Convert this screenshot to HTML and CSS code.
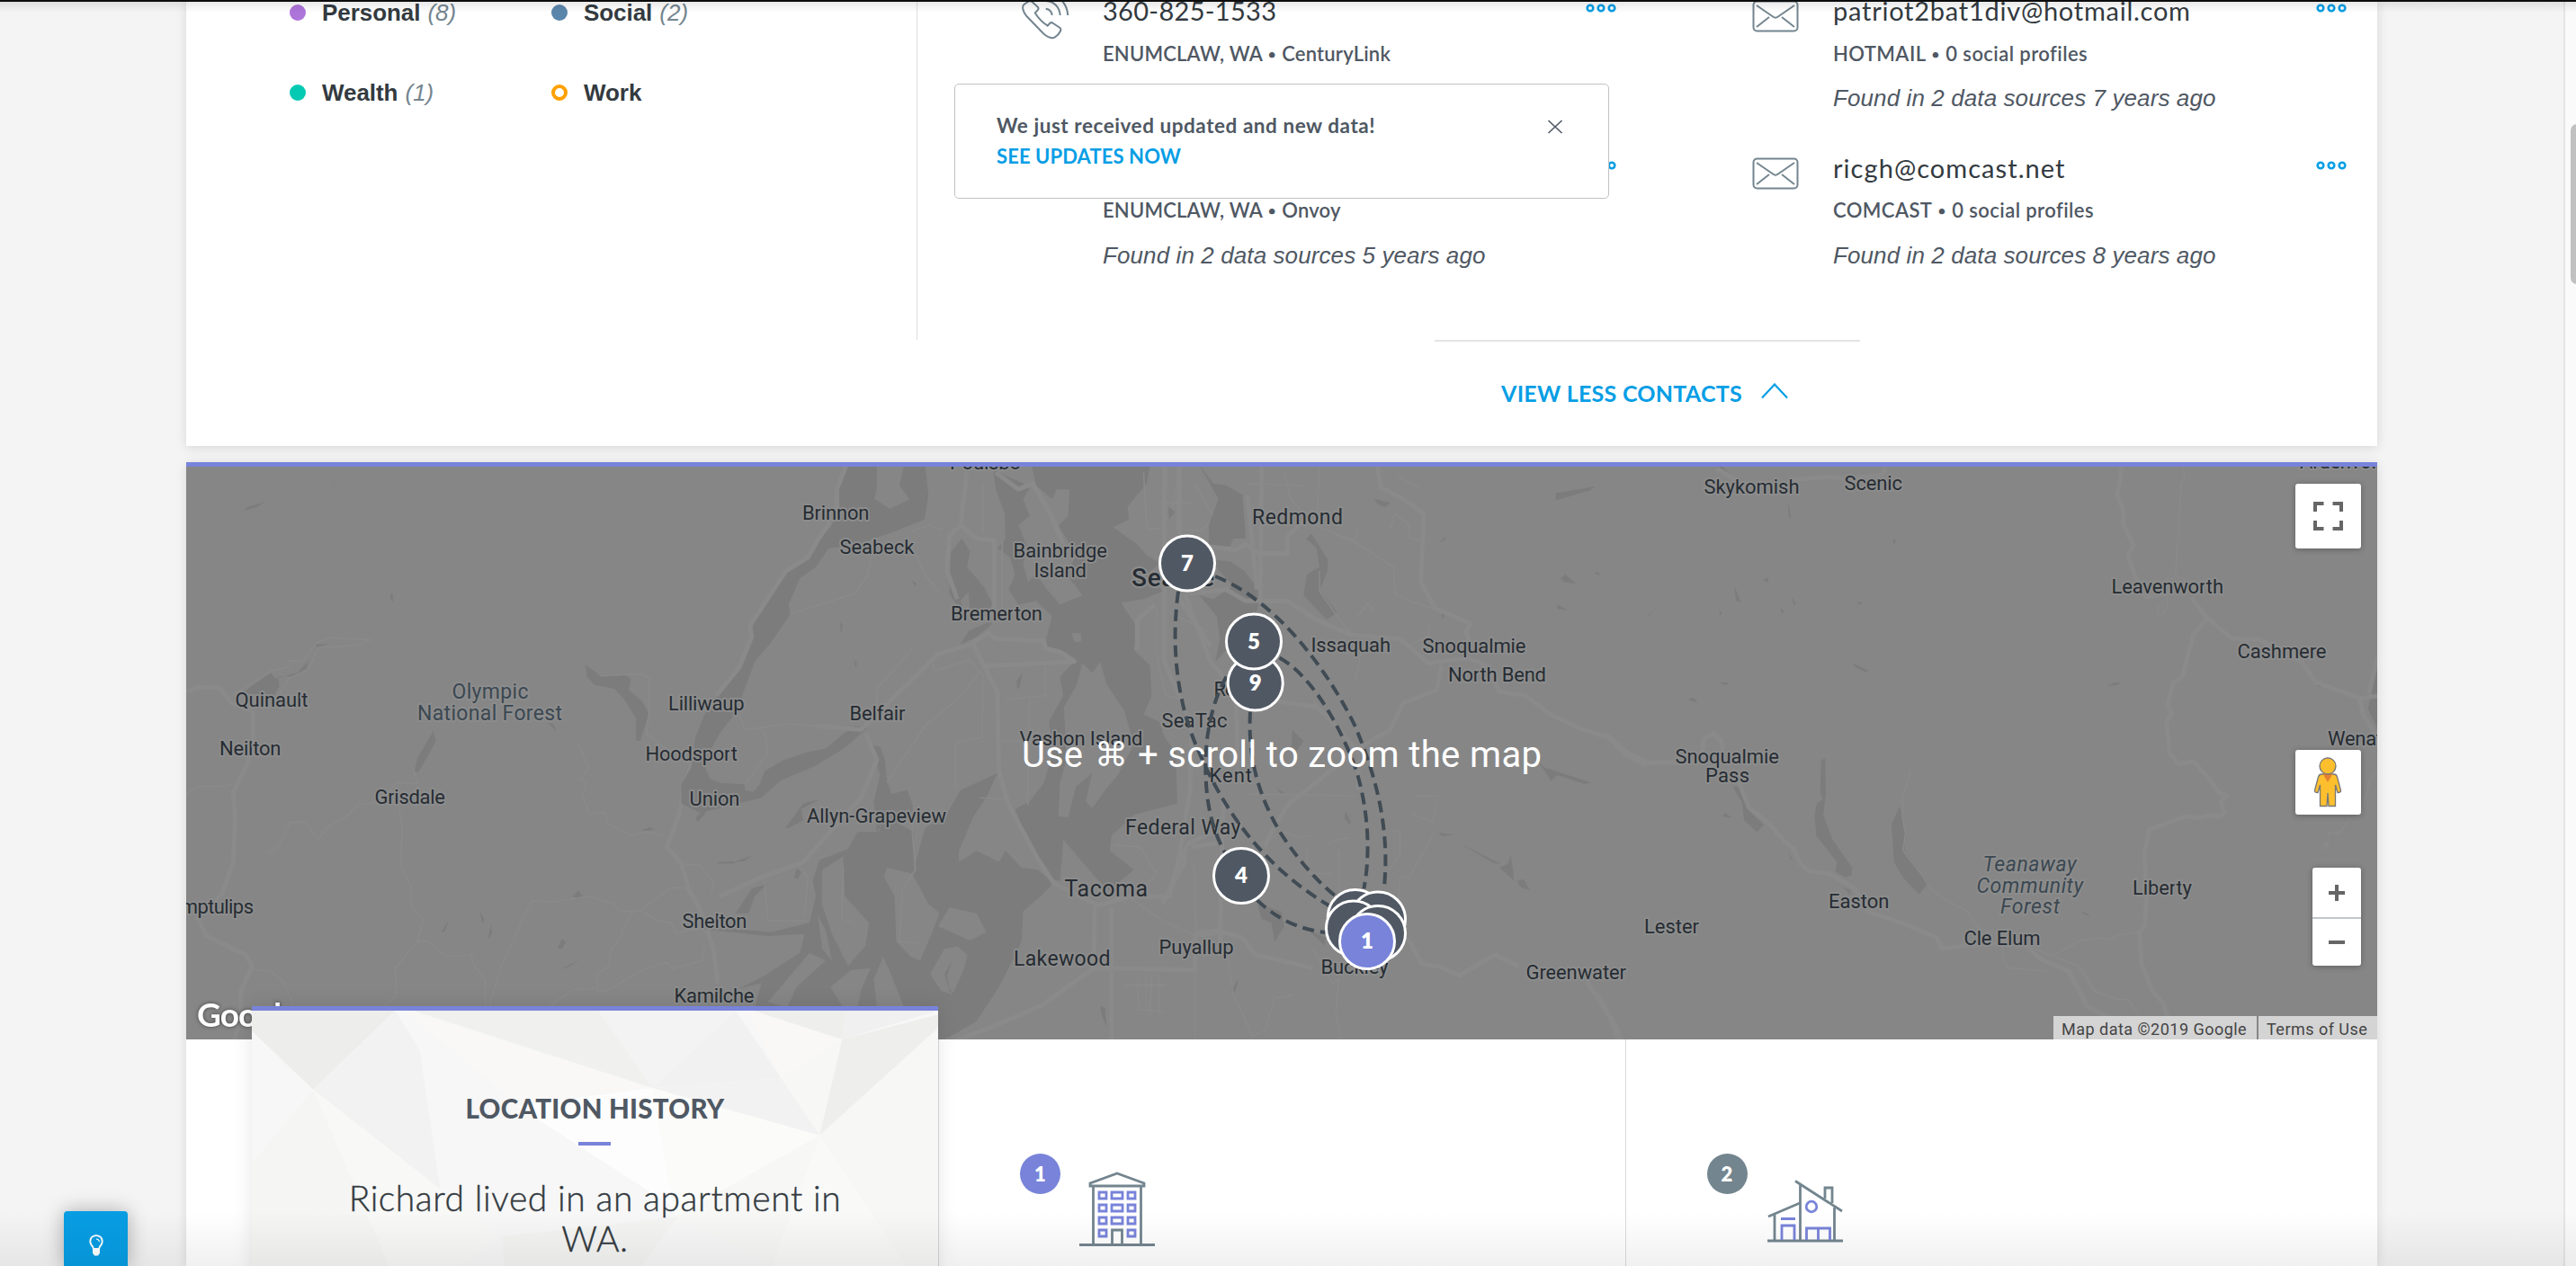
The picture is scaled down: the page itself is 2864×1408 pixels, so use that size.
FILE: index.html
```html
<!DOCTYPE html>
<html lang="en">
<head>
<meta charset="utf-8">
<title>Report</title>
<link rel="stylesheet" href="styles.css">
</head>
<body>
<svg class="defs" width="0" height="0">
  <symbol id="mail" viewBox="0 0 52 36"><rect x="1.5" y="1.5" width="49" height="33" rx="4"/><path d="M5 6l18.500 12.800q2.500 1.800 5 0L47 6M5 30l14-11M47 30L33 19"/></symbol>
  <symbol id="phone" viewBox="0 0 54 56"><path d="M5.700 29.300C1 24 0 18 2.500 16L5.700 13.700C8 12 10.500 12 12.300 13.700L17.500 18.500Q19.500 20.500 17.500 22.500L14.700 25.300Q20 34 28.700 39.700L31 37Q33 35.300 35 37L42.500 42Q44 43.500 43 45.500 41 50 36.500 52.600C32 54.500 27 51 24 48.300Z"/><path d="M26.700 20.700Q33 21.500 33.700 28M27 12C36 12.500 42 19 42.700 28M27 3C41 4 50.500 15 51.300 28"/></symbol>
  <symbol id="dots" viewBox="0 0 34 10"><circle cx="5" cy="5" r="3.300"/><circle cx="17" cy="5" r="3.300"/><circle cx="29" cy="5" r="3.300"/></symbol>
</svg>

<main class="report">
  <section class="card contacts">
    <ul class="legend">
      <li><i class="dot personal"></i><b>Personal</b><em>(8)</em></li>
      <li><i class="dot social"></i><b>Social</b><em>(2)</em></li>
      <li><i class="dot wealth"></i><b>Wealth</b><em>(1)</em></li>
      <li><i class="dot work"></i><b>Work</b></li>
    </ul>
    <div class="contact-area">
      <div class="contact-grid">
        <article class="contact">
          <div class="icon"><svg class="phone"><use href="#phone"/></svg></div>
          <div class="info"><h3>360-825-1533</h3><p>ENUMCLAW, WA <i>•</i> CenturyLink</p></div>
          <svg class="more"><use href="#dots"/></svg>
        </article>
        <article class="contact email">
          <div class="icon"><svg class="mail"><use href="#mail"/></svg></div>
          <div class="info"><h3>patriot2bat1div@hotmail.com</h3><p>HOTMAIL <i>•</i> 0 social profiles</p><em>Found in 2 data sources 7 years ago</em></div>
          <svg class="more"><use href="#dots"/></svg>
        </article>
        <article class="contact">
          <div class="icon"></div>
          <div class="info"><h3></h3><p>ENUMCLAW, WA <i>•</i> Onvoy</p><em>Found in 2 data sources 5 years ago</em></div>
          <svg class="more"><use href="#dots"/></svg>
        </article>
        <article class="contact email">
          <div class="icon"><svg class="mail"><use href="#mail"/></svg></div>
          <div class="info"><h3 class="loose">ricgh@comcast.net</h3><p>COMCAST <i>•</i> 0 social profiles</p><em>Found in 2 data sources 8 years ago</em></div>
          <svg class="more"><use href="#dots"/></svg>
        </article>
      </div>
    </div>
    <a class="view-less"><span>VIEW LESS CONTACTS</span><svg viewBox="0 0 30 18"><path d="M1 16.500L15 1.500l14 15"/></svg></a>
  </section>

  <section class="card locations">
    <div class="map">
      <svg class="map-canvas" viewBox="207 519 2436 637">
        <g class="shape" transform="translate(200 500) scale(.39541 .42092)">
          <path class="water" d="M180 640L255 590L270 605L330 590L362 558L355 580L320 598L275 600L280 625L265 650L190 645ZM375 515L415 514L390 522ZM178 163L190 152L240 138L215 152ZM428 105L442 65L434 90ZM592 380l7 0l0 22l-7-8ZM712 745L720 770L685 830L670 852L660 850L668 815ZM1140 568L1185 600L1250 596L1268 605L1262 635L1300 665L1320 700L1312 715L1295 770L1283 770L1282 710L1250 660L1222 632L1165 622L1145 600ZM1035 722l14 2l10 20ZM1105 1180l15-15l12 15l-12 8ZM735 1275l20-30l-10 28ZM843 1222l13 18l-6 12ZM875 1255l3 22l-12 18ZM1062 1318l12-25l12 8l-12 18ZM1070 1373l55-25l-35 20ZM1300 1005l20-8l15 8l-30 3ZM1510 1090l50-2l0 6l-45 0ZM1450 972l30-25l-5 18l-20 20Z"/>
          <path class="road wide" d="M0 645L50 628L112 630L145 670L205 692L205 770L190 830L150 905L155 970L150 1090L118 1175L80 1210L50 1240L75 1285L185 1335L203 1365L170 1435L172 1500L150 1568M1568 595L1490 700L1420 880L1405 960L1370 1050L1410 1095L1430 1160L1465 1220L1500 1320L1512 1410"/>
          <path class="road" d="M140 655L255 585L305 575L305 558L345 558L385 510L420 498L538 502L500 517L390 524L362 580L305 605L275 655M0 920L50 890L110 890L150 885M245 1065L272 1055L310 985L350 985L388 1030L420 993L465 972L500 940L560 930L610 880L670 882L655 845M615 940L625 1000L622 1100L648 1150L652 1210L685 1240L668 1300L605 1370L610 1440L570 1475M668 1300L695 1298L750 1340L820 1335L825 1360L858 1400L860 1470M870 1470L900 1375L945 1280L990 1192L1050 1195L1150 1180L1220 1200L1235 1220L1295 1218L1380 1158L1430 1158M1295 1218L1345 1245L1380 1250L1395 1277L1470 1265M1275 1220L1242 1270L1240 1290L1212 1320L1208 1365L1172 1385L1175 1425L1105 1427L1040 1470M1172 1430L1200 1430L1300 1375L1370 1355L1385 1372L1470 1350L1475 1310M1120 778L1150 842L1125 872L1145 880L1133 910L1150 962L1195 958L1205 990L1270 1020L1310 1010L1360 1020M1180 598L1300 592L1320 605L1320 690L1312 750L1380 800M205 1373L255 1378L290 1405L320 1470M1410 1095L1460 1098L1500 1140L1495 1170"/>
        </g>
        <g class="shape" transform="translate(800 500) scale(.35714 .42092)">
          <path class="water" d="M395 40L370 105L375 160L345 205L305 240L275 285L208 322L150 405L100 465L102 490L62 580L-5 650L-47 700L-75 760L-88 840L-119 885L-119 935L-60 960L60 935L130 920L190 875L300 835L395 785L460 735L420 730L380 755L330 790L270 800L200 820L140 850L125 885L105 905L80 900L78 885L0 880L-30 870L-45 840L-25 790L0 750L55 690L75 640L110 560L160 510L220 435L215 410L250 340L300 310L340 260L420 255L480 235L550 215L638 185L650 120L640 40Z"/>
          <path class="water" d="M850 40L870 60L905 75L960 95L985 90L970 40L1340 40L1330 90L1270 150L1275 185L1225 205L1300 250L1330 280L1370 300L1330 330L1380 375L1320 395L1250 405L1300 470L1290 530L1340 570L1345 650L1320 700L1370 720L1385 760L1420 800L1425 935L1290 965L1220 1020L1215 1060L1290 1110L1240 1145L1225 1175L1170 1130L1070 1030L1060 1140L1030 1135L960 1040L920 950L965 930L1010 880L1040 790L1025 720L1070 650L1060 600L1110 555L1065 530L1010 520L1020 490L1035 440L985 400L930 410L900 370L920 330L905 285L865 260L890 235L888 170L860 105Z"/>
          <path class="water" d="M720 270L755 235L780 270L770 310L825 365L850 410L820 440L780 430L775 375L750 400L765 430L745 420L715 380ZM850 460L800 495L750 515L775 480L840 455ZM470 780L500 785L515 820L520 870L535 910L585 900L610 960L560 990L520 970L490 1010L480 930L500 860Z"/>
          <path class="water" d="M865 855L750 900L710 960L640 1000L620 1060L605 1110L605 1010L560 990L520 960L495 1010L430 1010L400 1055L310 1085L290 1140L300 1180L280 1250L160 1275L-60 1258L-60 1266L150 1285L265 1280L250 1330L140 1390L60 1425L130 1410L110 1475L680 1475L680 1568L740 1540L800 1510L870 1420L900 1370L940 1300L945 1220L1000 1180L1040 1145L990 1110L940 1105L890 1060L870 1090L800 1060L745 1090L745 1060L790 970L830 920ZM205 1000L260 935L310 925L255 950L260 980L215 1000ZM50 1225L100 1160L148 1148L110 1180L90 1225ZM375 455l8 10l-5 22ZM418 555l10 10l-5 12ZM925 610l18-20l-8 35l-8 10ZM595 345l18 8l-3 8ZM232 1130l8-22l15 5l-10 22ZM45 1090l60-18l-30 16ZM1185 1470l15 5l5 50l-15-30Z"/>
          <path class="land" d="M490 40L490 100L482 130L530 157L592 132L560 95L575 40ZM975 88L1035 130L1050 105L1090 105L1085 175L1055 200L1110 280L1080 330L1130 385L1060 410L1020 370L985 330L960 350L945 300L960 260L930 200L965 175L945 130ZM1095 485L1125 485L1125 508L1105 508ZM1130 565L1160 590L1185 560L1205 620L1260 690L1290 780L1240 860L1200 900L1160 948L1140 930L1160 855L1110 890L1085 972L1055 968L1060 880L1080 820L1072 680L1110 625ZM520 1105L600 1120L650 1200L685 1225L660 1280L625 1350L595 1340L550 1300L545 1180L512 1130ZM680 1260L715 1210L800 1225L830 1275L780 1297ZM655 1385L700 1320L740 1312L772 1335L760 1375L725 1440L690 1430ZM320 1110L385 1075L390 1180L465 1250L455 1310L400 1365L350 1280L318 1200ZM345 1420L410 1375L470 1370L440 1430L430 1475L385 1475ZM490 1475L480 1400L510 1340L540 1400L575 1475ZM150 1460L280 1330L330 1350L240 1420L210 1475ZM305 1230L330 1270L350 1350L320 1320Z"/>
          <path class="water" d="M785 1110L850 1140L880 1165L930 1200L918 1235L870 1215L820 1160ZM725 1350L708 1390L715 1430L735 1445L712 1420L700 1385Z"/>
          <path class="road wide" d="M395 40L365 105L365 165L305 240L275 285L205 322L95 465L100 495L62 575L-10 650M770 60L750 200L715 230L708 320L740 395M750 200L800 235L855 240L855 440M860 60L930 105L975 90L1030 170L1070 250M780 515L680 540L560 640L440 740L300 730M780 515L835 485L860 500L1010 505L1015 525L1060 535L1105 560L830 572M790 515L865 640L870 850L900 940L990 1080L1040 1145L1180 1205L1280 1180L1400 1180L1420 1110L1460 1040L1568 1000M0 1180L130 1130L260 1090L440 920L490 820L455 750M1168 1205L1165 1370L1480 1375L1480 1285L1568 1275M1220 1210L1220 1568M1165 1370L1000 1470L850 1525L740 1560M1385 45L1385 560L1470 730L1465 900L1430 1080L1400 1180M1430 45L1435 400L1530 520M1355 410L1300 450L1300 530"/>
          <path class="road" d="M220 435L330 405L420 380L460 335L485 240M600 525L550 575L490 630L488 690M580 220L640 330L685 380M600 215L655 200L695 213M820 90L820 220M880 240L880 420M660 560L670 585L780 555L810 590L740 660L640 730L520 880M820 590L818 760L735 775L735 900M1015 575L1015 650L885 660M965 660L960 940M880 770L960 770M810 920L900 925M60 700L80 740L220 725L360 735M140 745L150 800L80 885M605 930L600 1010L610 1110L570 1160L560 1300L620 1305M140 1140L150 1245L270 1245M240 1100L275 1130L265 1230M385 1100L380 1240L420 1250M1270 1180L1370 1240L1480 1285M1320 60L1330 210L1370 210L1410 160L1430 50M1480 90L1540 180L1500 215L1420 210M1230 1045L1310 1050L1360 1120L1320 1160M1360 420L1360 540L1390 650L1440 660M1400 430L1520 480M1255 1415L1385 1415M1300 1385L1305 1480L1385 1485M1345 1385L1340 1500M1480 1380L1480 1568M1370 140L1470 140"/>
        </g>
        <g class="shape" transform="translate(1260 500) scale(.35714 .42092)">
          <path class="water" d="M205 40L250 90L290 95L340 120L350 235L312 235L295 265L235 250L235 200L265 130ZM235 290L300 295L345 320L400 380L385 425L290 530L255 560L270 500L260 440L205 385L250 395L310 360ZM555 222L605 290L605 320L580 372L635 430L602 450L530 385L540 330L580 310L570 260L538 235ZM1315 115L1440 97L1420 108L1315 134ZM495 740L530 770L505 800L492 790ZM1230 800L1280 840L1425 880L1405 884L1320 860L1300 875L1270 835ZM1140 1105L1165 1095L1175 1072L1182 1110L1185 1138ZM1195 1140L1215 1135L1235 1165L1205 1155ZM1015 1040L1145 1095L1120 1092ZM385 1200L460 1220L470 1260L440 1300L430 1250L400 1240ZM545 1270L600 1290L595 1310ZM1330 340l15-10l35 25l-40-5ZM1320 410l35 15l-35-4ZM1435 325l15 0l0 8ZM950 245l25-15l-5 10ZM660 955l18 30l-5 5l-15-15ZM445 895l25 12l-10 2ZM750 130l50 10l-15 12l-25-8ZM950 1012l50 6l-40 3ZM303 1435l25-40l-10 35ZM960 435l12 0l-10 15ZM110 150l20 15l-20 20Z"/>
          <path class="road wide" d="M100 45L95 210M145 45L140 210M400 45L395 400L480 400L570 450L680 490L830 500L920 565L1040 550L1100 570L1140 640L1220 650L1300 700L1400 740L1480 760L1530 805L1600 835M760 45L770 100L840 130L905 170L895 350L940 420L1050 460L1035 480L1060 540M170 250L320 265L350 250L390 275L480 275L480 230L540 180M355 120L385 370M960 570L945 635L840 670L800 740L700 790L480 940L430 1010L410 1050M170 380L290 370L350 400L395 400M280 930L270 1300M190 1280L260 1270L340 1290L380 1335L560 1370M800 1270L860 1300L900 1360L950 1365L1015 1390L1125 1335L1200 1365M1410 1405L1440 1440L1490 1510L1510 1568M160 380L240 560L320 640L325 850M295 650L450 665L570 680M160 1060L160 1090L90 1200M180 1050L260 1040M560 670L620 720L700 800L700 900"/>
          <path class="road" d="M470 60L490 130L540 180L570 200L580 50M355 90L530 95M570 200L700 250L810 310L815 380L860 400L970 430M800 210L815 170L860 200L860 235L905 240M700 200L690 240L630 225M580 320L580 375L660 470L700 500M700 440L730 405L750 430M710 530L690 615M350 910L690 915M370 1050L470 1010L520 1025L560 1020M600 1040L670 1025M640 1060L640 1190M540 1060L540 1120L620 1120M800 1005L830 1010L830 1070L790 1120M940 1005L860 1130L830 1130L825 1200M880 915L950 915L930 985L865 962M820 70L895 103M295 1330L310 1440L340 1490L370 1550L410 1535L440 1450L500 1440M560 1320L620 1410L640 1400L630 1490L650 1568M190 1100L195 1280M0 1415L100 1415M40 1385L40 1480M80 1385L80 1495M920 455L920 490L860 520M340 820L380 860"/>
        </g>
        <g class="shape" transform="translate(1780 500) scale(.35714 .42092)">
          <path class="water" d="M410 890L435 890L455 950L507 992L485 1010L445 978L440 935ZM686 820L698 816L700 910L692 965L720 1030L782 1105L780 1125L760 1130L730 1115L735 1090L670 1020L665 965L672 935L690 925L682 905ZM930 942L938 970L948 1015L945 1060L1020 1145L990 1175L940 1130L912 1090L904 990ZM785 565L830 583L830 590L790 575ZM415 360L435 403L420 400ZM143 443L172 417L150 440ZM505 345l18-8l-5 15ZM592 390l15 15l-5 8ZM370 615l30 2l-15 6ZM270 660l18-5l12 15ZM378 970l10-10l18 12ZM582 1060l15 25l-6-2ZM755 1158l20 5l5 15ZM1495 1222l15 2l10 10ZM908 238l9 0l-3 14ZM795 403l20 0l-10 8ZM368 425l8 5l-5 12ZM560 418l10 10l-8 5ZM335 42l40 0l35 30l-40-25ZM582 135l10 50l-8-10Z"/>
          <path class="road wide" d="M-10 755L20 755L80 800L150 828L300 825M315 800L320 765L350 750L375 770L380 800M430 880L460 945L520 985L570 1035L600 1055L620 1095L650 1115L710 1120L790 1160L830 1220L950 1255L1045 1290L1062 1318L1150 1310L1310 1300L1365 1345L1460 1380L1510 1470L1580 1500M885 40L880 65L770 78L700 72L600 80M360 50L430 85M-10 1440L50 1530L65 1568"/>
          <path class="road" d="M962 850L940 920L938 970L948 1015L940 1060L1000 1125L1030 1165L1085 1195L1140 1220L1170 1260L1350 1320L1490 1365L1540 1430L1568 1440M1250 1310L1252 1350L1270 1370L1395 1378M1410 1335L1500 1295L1568 1290"/>
        </g>
        <g class="shape" transform="translate(2300 500) scale(.3597 .43367)">
          <path class="water" d="M954 560L938 620L925 665L954 715ZM118 605l25-8l18 0l-15 8ZM40 1187l15 3l10 8ZM765 600l30 5l-22 4Z"/>
          <path class="road wide" d="M165 40L150 115L170 160L168 190L200 245L183 270L210 335L240 378L300 370M380 380L425 430L505 485L590 487L720 545L765 597L900 638L954 632M425 435L385 475L352 580L322 600L305 655L318 675L302 700L312 780L340 806L385 800L425 835L465 880L488 888L470 905L482 930L468 942L430 938L395 945L362 940L248 975L235 1035L240 1150L235 1220L218 1240L225 1320L260 1390L292 1420L305 1455M954 530L928 625M900 640L910 680L954 740M0 1340L60 1430L130 1460"/>
          <path class="road" d="M355 45L358 75L348 85L330 325L355 330L380 360M330 330L305 330L305 405L290 425L272 420L278 395M220 1235L145 1248L125 1258L90 1252L40 1258L0 1275M0 1315L25 1322L80 1390L150 1410L185 1410L215 1450M785 1030L795 1005L800 1025L803 983L838 983L865 950L905 935L930 850L954 822"/>
        </g>
        <g class="label">
          <text x="261.500" y="786" textLength="81">Quinault</text><text x="244" y="839.500" textLength="68.500">Neilton</text><text x="416.500" y="894" textLength="78.500">Grisdale</text><text x="174" y="1015.500" textLength="108">Humptulips</text>
          <text x="743" y="790" textLength="84.500">Lilliwaup</text><text x="717.500" y="846" textLength="102.500">Hoodsport</text><text x="766.500" y="895.500" textLength="56">Union</text><text x="758.500" y="1031.500" textLength="72">Shelton</text><text x="749.500" y="1114.500" textLength="89">Kamilche</text>
          <text x="892" y="577.500" textLength="74.500">Brinnon</text><text x="933.500" y="615.500" textLength="83">Seabeck</text><text x="1126.500" y="620" textLength="104.500">Bainbridge</text><text x="1149.500" y="642" textLength="58.500">Island</text><text x="1057" y="690" textLength="102">Bremerton</text><text x="1056" y="521.500" textLength="79">Poulsbo</text><text x="944.500" y="800.500" textLength="62">Belfair</text><text x="897" y="915" textLength="155">Allyn-Grapeview</text><text x="1133.500" y="829" textLength="137">Vashon Island</text>
          <text x="1291.500" y="809" textLength="73">SeaTac</text><text x="1349.500" y="773.500" textLength="64">Renton</text><text x="1344.500" y="870" textLength="47.500">Kent</text><text x="1288.500" y="1061" textLength="83">Puyallup</text><text x="1457.500" y="724.500" textLength="88.500">Issaquah</text><text x="1581.500" y="726" textLength="115">Snoqualmie</text><text x="1610" y="757.500" textLength="109">North Bend</text><text x="1468.500" y="1083" textLength="75">Buckley</text><text x="1696.500" y="1089" textLength="111.500">Greenwater</text>
          <text x="1894.500" y="548.500" textLength="106">Skykomish</text><text x="2050.500" y="545" textLength="64.500">Scenic</text><text x="1862.500" y="848.500" textLength="115.500">Snoqualmie</text><text x="1896" y="870" textLength="49">Pass</text><text x="2033" y="1010" textLength="67.500">Easton</text><text x="1828" y="1037.500" textLength="61">Lester</text><text x="2183.500" y="1051" textLength="85">Cle Elum</text>
          <text x="2347.500" y="660" textLength="124.500">Leavenworth</text><text x="2487.500" y="732" textLength="99">Cashmere</text><text x="2588" y="828.500" textLength="107">Wenatchee</text><text x="2371" y="995" textLength="66">Liberty</text><text x="2557" y="520.500" textLength="92">Ardenvoir</text>
          <g class="town"><text x="1251" y="928" textLength="128.500">Federal Way</text><text x="1127" y="1073.500" textLength="107.500">Lakewood</text><text x="1392" y="583" textLength="101">Redmond</text></g>
          <text class="city" x="1183.500" y="996.500" textLength="92.500">Tacoma</text><text class="metro" x="1258" y="651.500" textLength="92">Seattle</text>
          <g class="park"><text x="502.500" y="776.500" textLength="85">Olympic</text><text x="464" y="800.500" textLength="161">National Forest</text><g class="slanted"><text x="2204.500" y="969" textLength="104">Teanaway</text><text x="2197.500" y="992.500" textLength="118.500">Community</text><text x="2224" y="1016" textLength="66">Forest</text></g></g>
        </g>
        <g class="trail" transform="translate(1260 500) scale(.35714 .42092)">
          <path d="M140 375C115 530 140 680 205 800C290 970 420 1110 610 1205M255 335C450 400 610 590 690 730C760 870 800 1010 780 1165M455 550C560 600 650 740 695 850C730 950 740 1060 718 1160M364 693C355 830 400 930 460 1015C510 1080 570 1140 630 1180M290 600C235 680 220 790 226 870C230 950 250 1010 285 1065M385 1190C440 1235 510 1268 600 1276"/>
        </g>
        <g class="pins">
          <circle cx="1320" cy="626.500" r="30.500"/><text x="1320" y="634.500">7</text>
          <circle cx="1395.700" cy="759.500" r="30.500"/><text x="1395.700" y="768">9</text>
          <circle cx="1394" cy="713.500" r="30.500"/><text x="1394" y="721.500">5</text>
          <circle cx="1380" cy="974" r="30.500"/><text x="1380" y="982">4</text>
          <circle cx="1506.800" cy="1020" r="30.500"/><circle cx="1532" cy="1022.500" r="30.500"/><circle cx="1505" cy="1032.500" r="30.500"/><circle cx="1532" cy="1038" r="30.500"/>
          <circle class="current" cx="1520" cy="1047" r="30.500"/><text x="1520" y="1055">1</text>
        </g>
        <text class="google" x="219" y="1142" textLength="113">Google</text>
        <text class="hint" y="852.500"><tspan x="1136" textLength="68">Use</tspan><tspan class="key" x="1217" y="852">⌘</tspan><tspan x="1265" y="852.500" textLength="449">+ scroll to zoom the map</tspan></text>
      </svg>
      <div class="controls">
        <div class="ctl"><svg width="33" height="32"><path d="M2 11V2H11.500M21.500 2H31V11M31 21V30H21.500M11.500 30H2V21" fill="none" stroke="#666" stroke-width="4"/></svg></div>
        <div class="ctl pegman"><svg width="32" height="56" viewBox="0 0 32 56"><path d="M9 19h14q2.500 0 3.500 3l4 15q.3 2.500-3.500 2.500L24.500 31v23.500h-7.500L16 40l-1 14.500H7.500V31L5 39.500Q1 39.500 1.500 37l4-15Q6.500 19 9 19z" fill="#fdbf2d" stroke="#777" stroke-width="1.300"/><path d="M10.500 18.500h11L16 28z" fill="#e58030"/><circle cx="16" cy="10" r="9" fill="#fdbf2d" stroke="#777" stroke-width="1.300"/></svg></div>
        <div class="zoom"><span><svg width="18" height="18"><path d="M0 9H18M9 0V18"/></svg></span><span><svg width="18" height="18"><path d="M0 9H18"/></svg></span></div>
      </div>
      <div class="legal"><span>Map data ©2019 Google</span><span>Terms of Use</span></div>
    </div>

    <div class="places">
      <div class="history">
        <svg class="facets" viewBox="414 132 1129 852" preserveAspectRatio="none">
          <path fill="#ebebea" d="M414 132H650L515 395L414 200z"/><path fill="#f2f2f2" d="M650 132L690 260L725 740L515 395z"/><path fill="#faf9f7" d="M665 132L1073 390L850 440z"/><path fill="#efefed" d="M680 132H985L1073 390z"/><path fill="#f3f3f3" d="M985 132H1210L1073 390z"/><path fill="#f0f0f0" d="M1210 132L1285 358L1073 390z"/><path fill="#faf9f7" d="M1230 132L1385 228L1285 358z"/><path fill="#ececeb" d="M1240 132H1390L1385 228z"/><path fill="#efeff0" d="M1390 132H1543L1385 228z"/><path fill="#ececea" d="M1543 145V190L1348 548L1385 228z"/><path fill="#f7f7f6" d="M1385 228L1348 548L1285 358z"/><path fill="#f2f2f2" d="M1073 390L1285 358L1348 548L1190 460z"/><path fill="#fff" d="M1073 390L850 450L1110 790z"/><path fill="#fcfcfa" d="M1073 390L1348 548L1110 820z"/><path fill="#f7f7f6" d="M1543 190V984H1490L1348 548z"/><path fill="#fafaf9" d="M1348 548L1490 984H1270z"/><path fill="#f7f7f6" d="M1348 548L1270 984L1115 820z"/><path fill="#f7f7f7" d="M850 450L1115 820L825 885z"/><path fill="#f9f9f8" d="M515 395L820 880L760 984H640z"/><path fill="#f5f5f3" d="M515 395L640 984H414V640z"/><path fill="#f4f4f3" d="M825 885L1115 820L1055 984H830z"/>
        </svg>
        <h2>LOCATION HISTORY</h2>
        <i class="rule"></i>
        <p>Richard lived in an apartment in<br>WA.</p>
      </div>
      <div class="place">
        <span class="num current">1</span>
        <svg class="building" width="84" height="86" viewBox="0 0 84 86">
          <g class="frame"><path d="M12 16v-3L42 2l30 11v3zM15.500 16V81M68.500 16V81M0 81.500H84M36.500 81V65h11v16"/></g>
          <g class="panes"><path d="M22 23h8v7h-8zM36 23h12v7H36zM54 23h8v7h-8zM22 37h8v7h-8zM36 37h12v7H36zM54 37h8v7h-8zM22 51h8v7h-8zM36 51h12v7H36zM54 51h8v7h-8zM22 65h8v7h-8zM54 65h8v7h-8z"/></g>
        </svg>
      </div>
      <div class="place">
        <span class="num">2</span>
        <svg class="house" width="84" height="72" viewBox="0 0 84 72">
          <g class="frame"><path d="M0 68H84M8 67V38M1 41L36 26M36.500 67V6M31 1.500L83 35M74.500 67V31M64 21V9h8v17"/></g>
          <g class="panes"><path d="M15 43.500H31M16 67V51h14v16M43.500 67V54h26v13M56.500 54v13"/><circle cx="49" cy="30" r="5.800"/></g>
        </svg>
      </div>
    </div>
  </section>
</main>

<aside class="toast">
  <div><strong>We just received updated and new data!</strong><a>SEE UPDATES NOW</a></div>
  <svg width="18" height="16"><path d="M1.500 1L16.500 15M16.500 1L1.500 15"/></svg>
</aside>
<div class="tips"><svg width="18" height="26" viewBox="0 0 18 26"><path d="M6 16Q5.500 13.500 3.500 11.500 1.300 8 3 4.500 5 1.200 9 1.200T15 4.500Q16.700 8 14.500 11.500 12.500 13.500 12 16z"/><path class="glint" d="M9 5q3 0 3.500 3"/><path class="base" d="M5 15.500h8v5l-2 3H7l-2-3z"/></svg></div>
<div class="scrollbar"><i></i></div>
<div class="top-edge"></div>
<div class="bottom-fade"></div>
</body>
</html>
```
FILE: styles.css
```css
* { box-sizing: border-box; }
html, body { height: 1408px; overflow: hidden; }
body { margin: 0; background: #f4f4f4; color: #333a40; font-family: Lato, sans-serif; position: relative; }
h2, h3, p, ul { margin: 0; padding: 0; list-style: none; }
.defs { position: absolute; }

.report { width: 2436px; margin-left: 207px; }
.card { background: #fff; box-shadow: 0 2px 12px rgba(0, 0, 0, .12); }

/* contacts */
.contacts { height: 496px; display: grid; grid-template: 378px 118px / 813px 1fr; }
.legend { border-right: 1px solid #dfdfdf; padding-left: 115px; display: grid; grid-template-columns: 291px 291px; grid-auto-rows: 28px; row-gap: 61px; align-content: start; }
.legend li { display: flex; align-items: center; font: 26px/28px "Liberation Sans", sans-serif; }
.legend em { color: #74858f; margin-left: 8px; }
.legend b { letter-spacing: -.050px; }
.dot { width: 18px; height: 18px; border-radius: 50%; margin-right: 18px; }
.personal { background: #ad74da; }
.social { background: #5b86ab; }
.wealth { background: #05cab3; }
.work { border: 4px solid #ffa000; }

.contact-area { overflow: hidden; }
.contact-grid { margin-top: -6px; padding-left: 116px; display: grid; grid-template-columns: 661px 661px; column-gap: 151px; grid-auto-rows: 131px; row-gap: 43.500px; }
.contact { display: flex; }
.icon { width: 90px; flex: none; }
.icon svg { display: block; fill: none; stroke: #73858f; stroke-width: 2; }
.mail { width: 52px; height: 36px; margin-top: 6px; }
.phone { width: 54px; height: 56px; margin-top: -5px; }
.info { flex: 1; white-space: nowrap; }
.info h3 { height: 36px; font-size: 29px; line-height: 36px; font-weight: 400; letter-spacing: .3px; }
.info p { margin-top: 14.500px; height: 30px; font-size: 22px; line-height: 30px; font-weight: 600; color: #4f5863; letter-spacing: .2px; }
.info p i { font-size: 16px; font-style: normal; margin: 0 .5px; position: relative; top: -2px; }
.info em { display: block; margin-top: 19.500px; font: italic 26px/30px "Liberation Sans", sans-serif; color: #4f5863; letter-spacing: .1px; }
.email h3 { letter-spacing: .75px; }
.email h3.loose { letter-spacing: 1.050px; }
.email p { letter-spacing: .42px; }
.more { width: 34px; height: 10px; margin-top: 10px; flex: none; fill: none; stroke: #069ee5; stroke-width: 2.600; }

.view-less { grid-column: 2; width: 473px; margin-left: 575px; height: 118px; border-top: 2px solid #e4e4e4; padding: 41.500px 0 0 74px; display: flex; gap: 21px; font-size: 25px; line-height: 30px; font-weight: 700; letter-spacing: .27px; color: #069ee5; white-space: nowrap; }
.view-less svg { width: 30px; height: 18px; margin-top: 4px; fill: none; stroke: #069ee5; stroke-width: 2.200; }

/* map */
.locations { margin-top: 18px; border-top: 5px solid #7883d9; }
.map { height: 637px; position: relative; background: #868686; }
.map-canvas { display: block; width: 2436px; height: 637px; }
.water { fill: #7c7c7c; }
.land { fill: #868686; }
.road { fill: none; stroke: #8a8a8a; stroke-width: 1.600; vector-effect: non-scaling-stroke; stroke-linejoin: round; }
.road.wide { stroke-width: 5; }
.label { font: 400 22px Roboto, sans-serif; fill: #262c33; stroke: #8c8c8c; stroke-width: 4; stroke-linejoin: round; paint-order: stroke; }
.town { font-size: 23px; }
.city { font-size: 25px; }
.metro { font-size: 28px; font-weight: 500; }
.park { font-size: 23px; fill: #3b4852; }
.slanted { font-style: italic; }
.trail path { fill: none; stroke: #404b54; stroke-width: 4; stroke-dasharray: 13 7; vector-effect: non-scaling-stroke; }
.pins circle { fill: #505864; stroke: #fff; stroke-width: 3; }
.pins circle.current { fill: #7883d9; }
.pins text { fill: #fff; font: 800 24px Lato, sans-serif; text-anchor: middle; }
.google { fill: #fff; font: 700 37px Lato, sans-serif; filter: drop-shadow(0 0 2px rgba(0, 0, 0, .5)); }
.hint { fill: #fff; font: 400 40px Roboto, sans-serif; }
.hint .key { font: 37px "DejaVu Sans", sans-serif; }

.controls { position: absolute; right: 18px; top: 19px; display: flex; flex-direction: column; align-items: flex-end; }
.ctl { width: 73px; height: 72px; background: #fff; border-radius: 3px; box-shadow: 0 1px 6px rgba(0, 0, 0, .3); display: flex; align-items: center; justify-content: center; }
.pegman { margin: 224px 0 59px; padding-right: 2px; }
.zoom { width: 54px; border-radius: 3px; background: #fff; box-shadow: 0 1px 6px rgba(0, 0, 0, .3); }
.zoom span { height: 55px; display: flex; align-items: center; justify-content: center; }
.zoom span + span { border-top: 2px solid #c2c6ca; height: 54px; }
.zoom path { stroke: #666; stroke-width: 4; }
.legal { position: absolute; right: 0; bottom: 0; height: 26px; display: flex; gap: 2px; font: 18px/29px Roboto, sans-serif; letter-spacing: .48px; color: #444; white-space: nowrap; }
.legal span { background: #d4d4d4; width: 226px; padding-left: 9px; }
.legal span + span { width: 132px; padding-left: 9px; }

/* location history */
.places { height: 252px; display: grid; grid-template-columns: 836px 763.500px 1fr; }
.history { position: relative; margin: -37px 0 0 73px; height: 300px; border-top: 5px solid #7883d9; background: #f7f7f7; text-align: center; box-shadow: 0 0 20px rgba(0, 0, 0, .1); }
.facets { position: absolute; inset: 0; width: 100%; height: 284px; opacity: .8; }
.history h2 { position: relative; padding-top: 91px; font-size: 29.500px; line-height: 36px; font-weight: 900; letter-spacing: .25px; color: #4f5863; }
.rule { position: relative; left: -1px; display: block; width: 36px; height: 4px; margin: 19px auto 0; background: #7883d9; }
.history p { position: relative; margin-top: 35.500px; font-size: 39px; line-height: 45px; font-weight: 300; letter-spacing: .57px; -webkit-text-stroke: .4px #333a40; white-space: nowrap; }
.place { display: flex; padding: 127px 0 0 90px; border-left: 1px solid #dcdcdc; }
.num { width: 45px; height: 45px; border-radius: 50%; background: #73858f; color: #fff; font-size: 22px; font-weight: 800; line-height: 45px; text-align: center; }
.num.current { background: #7883d9; }
.place svg { fill: none; stroke-width: 2.800; }
.frame { stroke: #73858f; }
.panes { stroke: #7883d9; }
.building { margin: 20px 0 0 21px; }
.house { margin: 29px 0 0 22px; }

/* floating pieces */
.toast { position: absolute; left: 1061px; top: 93px; width: 728px; height: 128px; background: #fff; border: 1.500px solid #c2c2c2; border-radius: 5px; padding: 28.500px 58px 0 46px; display: flex; justify-content: space-between; font-size: 22px; line-height: 34px; color: #4f5863; }
.toast strong, .toast a { display: block; font-weight: 700; white-space: nowrap; }
.toast strong { font-size: 22.500px; letter-spacing: .55px; }
.toast a { color: #069ee5; letter-spacing: .1px; margin-top: .5px; }
.toast svg { margin: 10px -8px 0 0; stroke: #4f5863; stroke-width: 1.600; }
.tips { position: absolute; left: 71px; top: 1347px; width: 71px; height: 61px; background: #079de3; border-radius: 4px 4px 0 0; box-shadow: 0 0 22px rgba(0, 0, 0, .3); padding: 26px 0 0 27px; }
.tips path { fill: none; stroke: #fff; stroke-width: 1.800; }
.tips .glint { stroke-width: 1.200; }
.tips .base { fill: #fff; stroke: none; }
.scrollbar { position: absolute; right: 0; top: 0; width: 14px; height: 1408px; background: #fafafa; border-left: 2px solid #e5e5e5; padding: 138px 0 0 6px; overflow: hidden; }
.scrollbar i { display: block; width: 14px; height: 178px; border-radius: 7px; background: #c1c1c1; }
.top-edge { position: absolute; left: 0; top: 0; width: 2864px; height: 14px; border-top: 2px solid #0c0c0c; background: linear-gradient(rgba(0, 0, 0, .09), transparent); }
.bottom-fade { position: absolute; left: 0; bottom: 0; width: 2864px; height: 60px; background: linear-gradient(transparent, rgba(0, 0, 0, .06)); }
```
